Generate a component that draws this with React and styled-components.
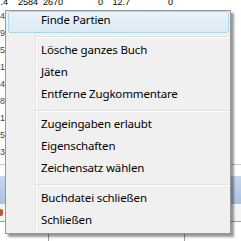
import React from 'react'
import styled, { createGlobalStyle } from 'styled-components'

const GlobalStyle = createGlobalStyle`
  body {
    margin: 0;
    background: #fff;
    font-family: "Noto Sans", "DejaVu Sans", sans-serif;
  }
`

const topCells = [
  { w: 8, t: '.4' },
  { w: 30, t: '2584' },
  { w: 25, t: '2670' },
  { w: 40, t: '0' },
  { w: 27, t: '12.7' },
  { w: 43, t: '0' },
]

const sideRows = ['1.4', '0.9', '2.5', '1.1', '3.4', '0.8', '2.1', '1.5', '0.3']

const menuItems = [
  { label: 'Finde Partien', active: true },
  'sep',
  { label: 'Lösche ganzes Buch' },
  { label: 'Jäten' },
  { label: 'Entferne Zugkommentare' },
  'sep',
  { label: 'Zugeingaben erlaubt' },
  { label: 'Eigenschaften' },
  { label: 'Zeichensatz wählen' },
  'sep',
  { label: 'Buchdatei schließen' },
  { label: 'Schließen' },
]

function App() {
  return (
    <>
      <GlobalStyle />
      <Screen>
        <Table>
          <TopRow>
            {topCells.map((c, i) => (
              <NumCell key={i} w={c.w}>{c.t}</NumCell>
            ))}
          </TopRow>
          {sideRows.map((t, i) => (
            <SideRow key={i}>
              <SideCell>{t}</SideCell>
            </SideRow>
          ))}
          <Spacer />
          <HeaderBand />
          <MarkRow>
            <Mark />
          </MarkRow>
          <BottomRow>
            <GridCell w={49} />
            <GridCell w={136} />
            <GridCell w={56} last />
          </BottomRow>
        </Table>

        <Menu>
          {menuItems.map((item, i) =>
            item === 'sep' ? (
              <Separator key={i} />
            ) : (
              <Item key={i} active={item.active}>{item.label}</Item>
            )
          )}
        </Menu>
      </Screen>
    </>
  )
}

export default App

const Screen = styled.div`
  position: relative;
  width: 241px;
  height: 241px;
  overflow: hidden;
  background: #fff;
`

const Table = styled.div`
  display: flex;
  flex-direction: column;
  font-family: "Liberation Sans", Arial, sans-serif;
  font-size: 9px;
  color: #222;
`

const TopRow = styled.div`
  display: flex;
  height: 10px;
  margin-top: -3px;
  line-height: 10px;
  font-size: 9px;
  color: #000;
`

const NumCell = styled.div`
  width: ${props => props.w}px;
  flex: none;
  text-align: right;
  white-space: nowrap;
`

const SideRow = styled.div`
  height: 17px;
  display: flex;
  align-items: center;
`

const SideCell = styled.div`
  width: 5px;
  overflow: hidden;
  direction: rtl;
  white-space: nowrap;
  color: #444;
`

const Spacer = styled.div`
  height: 4px;
  border-bottom: 1px solid #c8c8c8;
  margin-bottom: 11px;
`

const HeaderBand = styled.div`
  height: 28px;
  background: linear-gradient(#c6d7ec, #a9c1e0);
`

const MarkRow = styled.div`
  height: 17px;
  display: flex;
  align-items: center;
  border-bottom: 1px solid #a0a0a0;
  background: #f4f4f4;
`

const Mark = styled.div`
  width: 3px;
  height: 7px;
  background: #c0582a;
  border-radius: 0 2px 2px 0;
`

const BottomRow = styled.div`
  display: flex;
  height: 30px;
`

const GridCell = styled.div`
  width: ${props => props.w}px;
  flex: none;
  border-right: ${props => (props.last ? 'none' : '1px solid #9a9a9a')};
  box-sizing: border-box;
`

const Menu = styled.div`
  position: absolute;
  left: 5px;
  top: 10px;
  width: 221px;
  padding: 0 1px 0 2px;
  border: 1px solid #979797;
  background: #f0f0f0;
  box-shadow: 3px 3px 2px rgba(0, 0, 0, 0.4);
  display: flex;
  flex-direction: column;

  &::before {
    content: '';
    position: absolute;
    top: 0;
    bottom: 0;
    left: 29px;
    width: 1px;
    background: #e2e3e3;
    border-right: 1px solid #fff;
  }
`

const Item = styled.div`
  position: relative;
  height: 22px;
  box-sizing: border-box;
  padding: 0 0 0 32px;
  line-height: 16px;
  font-size: 11.5px;
  letter-spacing: -0.15px;
  color: #000;
  white-space: nowrap;
  border: 1px solid ${props => (props.active ? '#a8d8eb' : 'transparent')};
  border-radius: 3px;
  background: ${props =>
    props.active ? 'linear-gradient(#e9f4fb, #dbeaf5)' : 'transparent'};
`

const Separator = styled.div`
  position: relative;
  height: 8px;
  box-sizing: border-box;
  padding-top: 3px;

  &::after {
    content: '';
    display: block;
    margin-left: 28px;
    height: 1px;
    background: #e0e0e0;
    border-bottom: 1px solid #fff;
  }
`
